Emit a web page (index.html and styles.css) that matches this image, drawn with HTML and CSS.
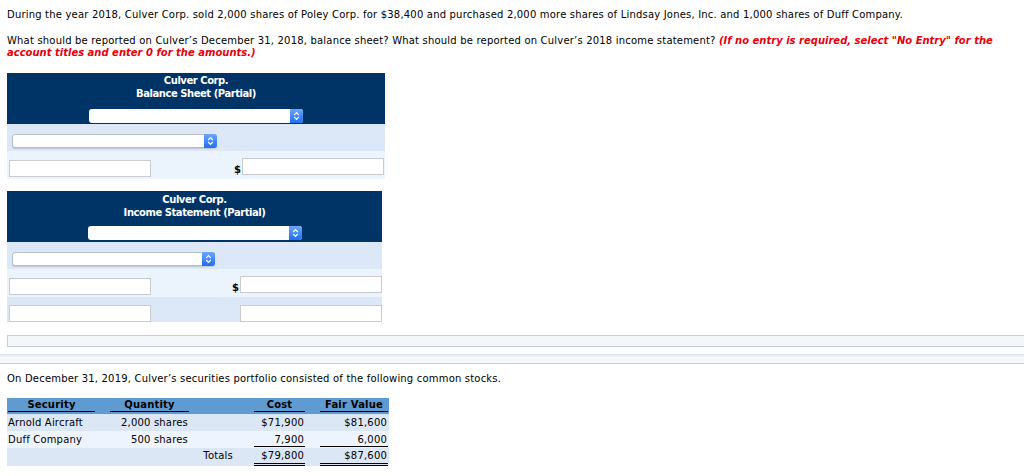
FILE: index.html
```html
<!DOCTYPE html>
<html>
<head>
  <title>Culver Corp. Securities</title>
  <link rel="stylesheet" href="styles.css">
</head>
<body>
  <div class="wrap">
    <p class="q q-first">During the year 2018, Culver Corp. sold 2,000 shares of Poley Corp. for $38,400 and purchased 2,000 more shares of Lindsay Jones, Inc. and 1,000 shares of Duff Company.</p>
    <p class="q">What should be reported on Culver’s December 31, 2018, balance sheet? What should be reported on Culver’s 2018 income statement? <em class="hint">(If no entry is required, select "No Entry" for the account titles and enter 0 for the amounts.)</em></p>

    <div class="stmt">
      <div class="stmt-head">
        <div class="stmt-title">Culver Corp.<br>Balance Sheet (Partial)</div>
        <div class="sel sel-head"><span class="sel-btn"><svg width="7" height="10" viewBox="0 0 7 10"><path d="M1.2 4 L3.5 1.7 L5.8 4 M1.2 6 L3.5 8.3 L5.8 6" fill="none" stroke="#fff" stroke-width="1.2"/></svg></span></div>
      </div>
      <div class="stmt-row row-a">
        <div class="sel sel-acct"><span class="sel-btn"><svg width="7" height="10" viewBox="0 0 7 10"><path d="M1.2 4 L3.5 1.7 L5.8 4 M1.2 6 L3.5 8.3 L5.8 6" fill="none" stroke="#fff" stroke-width="1.2"/></svg></span></div>
      </div>
      <div class="stmt-row row-b">
        <input class="fld fld-low" type="text">
        <span class="dollar">$</span>
        <input class="fld" type="text">
      </div>
    </div>

    <div class="stmt stmt-income">
      <div class="stmt-head">
        <div class="stmt-title">Culver Corp.<br>Income Statement (Partial)</div>
        <div class="sel sel-head"><span class="sel-btn"><svg width="7" height="10" viewBox="0 0 7 10"><path d="M1.2 4 L3.5 1.7 L5.8 4 M1.2 6 L3.5 8.3 L5.8 6" fill="none" stroke="#fff" stroke-width="1.2"/></svg></span></div>
      </div>
      <div class="stmt-row row-a">
        <div class="sel sel-acct"><span class="sel-btn"><svg width="7" height="10" viewBox="0 0 7 10"><path d="M1.2 4 L3.5 1.7 L5.8 4 M1.2 6 L3.5 8.3 L5.8 6" fill="none" stroke="#fff" stroke-width="1.2"/></svg></span></div>
      </div>
      <div class="stmt-row row-b">
        <input class="fld fld-low" type="text">
        <span class="dollar">$</span>
        <input class="fld" type="text">
      </div>
      <div class="stmt-row row-c">
        <input class="fld" type="text">
        <span class="dollar"></span>
        <input class="fld" type="text">
      </div>
    </div>

    <div class="bar"></div>
  </div>

  <div class="divider"></div>

  <div class="wrap">
    <p class="q q-port">On December 31, 2019, Culver’s securities portfolio consisted of the following common stocks.</p>

    <table class="port">
      <tr class="port-head">
        <td class="c-sec"><span class="cell under center">Security</span></td>
        <td class="c-gap1"></td>
        <td class="c-qty"><span class="cell under center">Quantity</span></td>
        <td class="c-tot"></td>
        <td class="c-gap2"></td>
        <td class="c-amt"><span class="cell under center">Cost</span></td>
        <td class="c-gap3"></td>
        <td class="c-fv"><span class="cell under center">Fair Value</span></td>
      </tr>
      <tr class="port-row shade">
        <td class="c-sec"><span class="cell">Arnold Aircraft</span></td>
        <td></td>
        <td class="c-qty"><span class="cell num">2,000 shares</span></td>
        <td></td>
        <td></td>
        <td class="c-amt"><span class="cell num">$71,900</span></td>
        <td></td>
        <td class="c-fv"><span class="cell num">$81,600</span></td>
      </tr>
      <tr class="port-row light">
        <td class="c-sec"><span class="cell">Duff Company</span></td>
        <td></td>
        <td class="c-qty"><span class="cell num">500 shares</span></td>
        <td></td>
        <td></td>
        <td class="c-amt"><span class="cell num under">7,900</span></td>
        <td></td>
        <td class="c-fv"><span class="cell num under">6,000</span></td>
      </tr>
      <tr class="port-row port-total shade">
        <td></td>
        <td></td>
        <td></td>
        <td class="c-tot"><span class="cell num">Totals</span></td>
        <td></td>
        <td class="c-amt"><span class="cell num double">$79,800</span></td>
        <td></td>
        <td class="c-fv"><span class="cell num double">$87,600</span></td>
      </tr>
    </table>
  </div>
</body>
</html>
```

FILE: styles.css
```css
html {
  overflow: hidden;
}
body {
  margin: 0;
  font-family: 'DejaVu Sans', Verdana, sans-serif;
  font-size: 10px;
  line-height: 12px;
  letter-spacing: 0.19px;
  color: #000;
  background: #fff;
}
.wrap {
  padding-left: 7px;
}
.q {
  margin: 0 0 14px 0;
}
.q-first {
  padding-top: 9px;
}
.hint {
  color: #e8000b;
  font-weight: bold;
  font-style: italic;
  letter-spacing: 0;
}

/* statement boxes */
.stmt {
  width: 378px;
  margin-top: 13px;
}
.stmt-income {
  width: 375px;
  margin-top: 12px;
}
.stmt-head {
  background: #003366;
  color: #fff;
  height: 51px;
  display: flex;
  flex-direction: column;
  align-items: center;
}
.stmt-title {
  font-weight: bold;
  text-align: center;
  padding-top: 2px;
  line-height: 12.5px;
  letter-spacing: -0.45px;
}
.stmt-income .stmt-title {
  padding-top: 3px;
}
.sel {
  display: flex;
  justify-content: flex-end;
  background: #fff;
  border-radius: 3px;
  height: 14px;
  box-sizing: border-box;
}
.sel-head {
  width: 214px;
  margin-top: 9px;
}
.stmt-income .sel-head {
  margin-top: 7px;
}
.sel-acct {
  width: 205px;
  border: 1px solid #b9bec6;
  box-shadow: 0 1px 1px rgba(0, 0, 0, 0.15);
}
.stmt-income .sel-acct {
  width: 203px;
}
.sel-btn {
  width: 13px;
  display: flex;
  align-items: center;
  justify-content: center;
  background: linear-gradient(#6aa6ff, #1f6ff2);
  border-radius: 0 3px 3px 0;
  margin: -1px -1px -1px 0;
}
.sel-head .sel-btn {
  margin: 0;
}
.stmt-row {
  display: flex;
  box-sizing: border-box;
}
.row-a {
  background: #dce7f7;
  height: 27px;
  padding: 10px 0 0 5px;
}
.row-b {
  background: #ebf3fd;
  height: 28px;
  padding: 7px 0 0 2px;
  align-items: flex-start;
}
.row-c {
  background: #dce7f7;
  height: 25px;
  padding: 8px 0 0 2px;
  align-items: flex-start;
}
.fld {
  width: 142px;
  height: 17px;
  box-sizing: border-box;
  margin: 0;
  padding: 0;
  border: 1px solid #c9cbce;
  background: #fff;
  outline: none;
}
.fld-low {
  margin-top: 2px;
}
.dollar {
  width: 90px;
  text-align: right;
  font-weight: bold;
  padding-top: 6px;
  padding-right: 1px;
  line-height: 12px;
  letter-spacing: 0;
}
.stmt-income .dollar {
  width: 88px;
}

/* separators */
.bar {
  margin-top: 13px;
  height: 12px;
  box-sizing: border-box;
  border: 1px solid #c6cfd9;
  border-right: none;
  background: #f3f7fa;
}
.divider {
  margin-top: 7px;
  height: 10px;
  box-sizing: border-box;
  border-top: 1px solid #d7e1eb;
  border-bottom: 1px solid #c6ced8;
  background: linear-gradient(#e6eef5, #f5f8fb 40%);
}
.q-port {
  margin-top: 9px;
  margin-bottom: 13px;
}

/* portfolio table */
.port {
  border-collapse: collapse;
  border-spacing: 0;
}
.port td {
  padding: 0;
  vertical-align: top;
}
.c-sec { width: 89px; }
.c-gap1 { width: 12px; }
.c-qty { width: 82px; }
.c-tot { width: 48px; }
.c-gap2 { width: 14px; }
.c-amt { width: 54px; }
.c-gap3 { width: 12px; }
.c-fv { width: 71px; }
.port-head {
  background: #5f9bd0;
  font-weight: bold;
  height: 16px;
}
.port-head td {
  padding: 1px 0 1px 0;
}
.cell {
  display: block;
  margin: 0 1px 0 2px;
  white-space: nowrap;
}
.c-sec .cell {
  margin-left: 1px;
}
.center {
  text-align: center;
}
.num {
  text-align: right;
  padding-right: 1px;
}
.c-tot .num {
  padding-right: 5px;
  margin: 0;
}
.under {
  border-bottom: 1px solid #000;
}
.double {
  border-bottom: 3px double #000;
  padding-bottom: 1px;
}
.port-row td {
  padding: 3px 0 2px 0;
}
.port-row.light td {
  padding: 3px 0 1px 0;
}
.port-total td {
  padding: 2px 0 0 0;
}
.shade {
  background: #dce7f6;
}
.light {
  background: #eef4fd;
}
```
